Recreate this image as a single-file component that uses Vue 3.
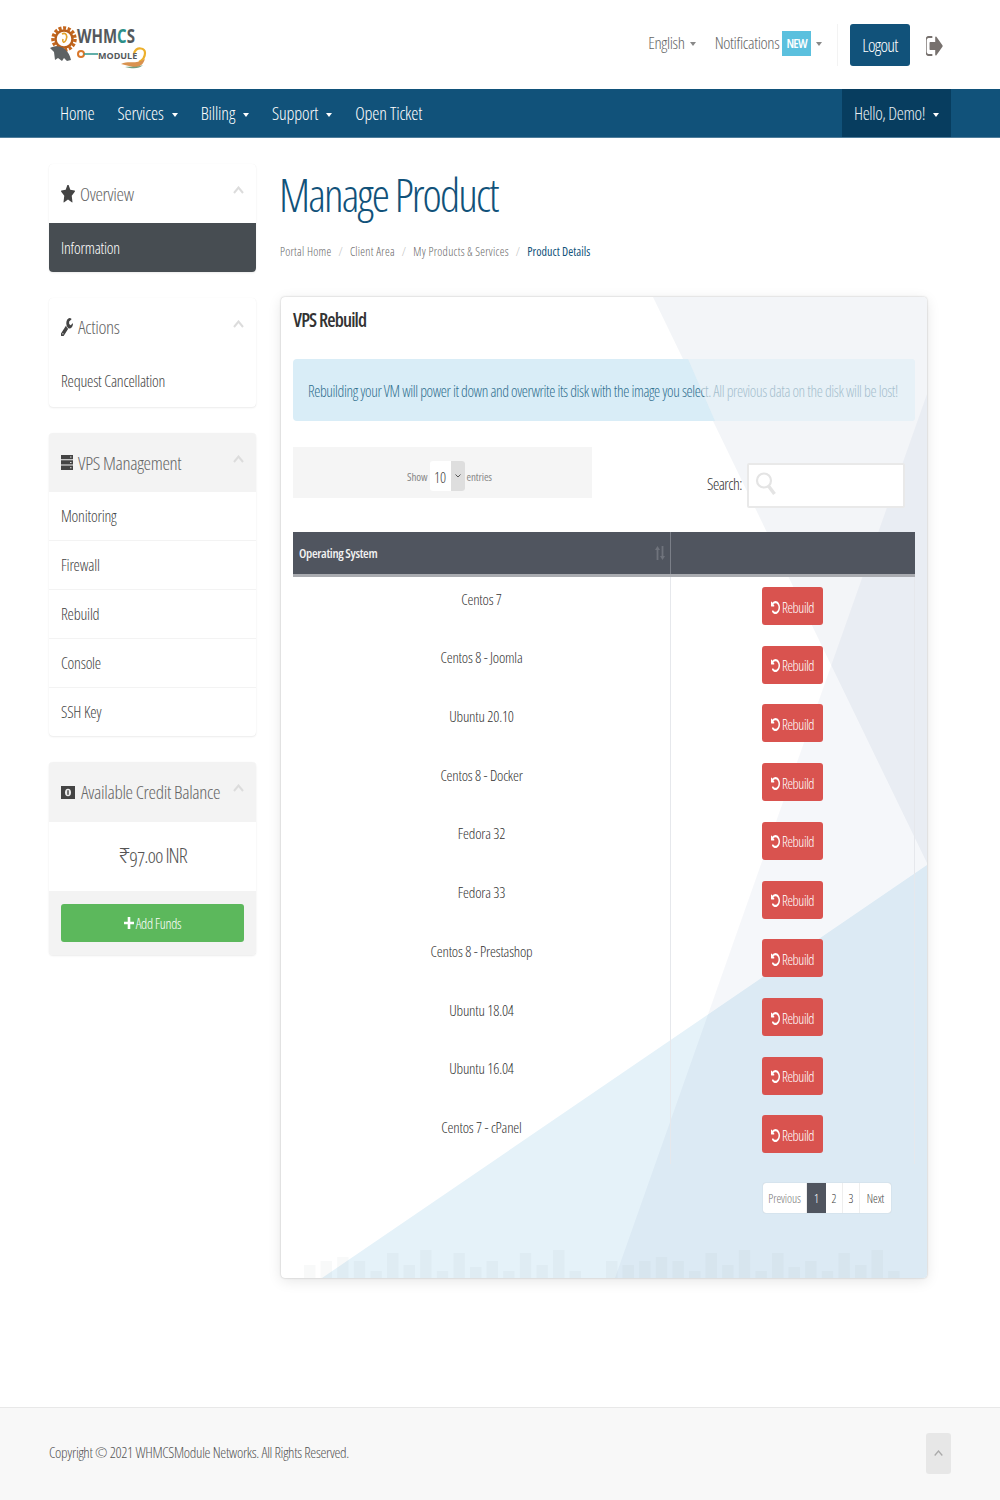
<script setup>
const navItems = [
  { label: 'Home', caret: false },
  { label: 'Services', caret: true },
  { label: 'Billing', caret: true },
  { label: 'Support', caret: true },
  { label: 'Open Ticket', caret: false },
]
const crumbs = ['Portal Home', 'Client Area', 'My Products & Services']
const vpsItems = ['Monitoring', 'Firewall', 'Rebuild', 'Console', 'SSH Key']
const systems = ['Centos 7', 'Centos 8 - Joomla', 'Ubuntu 20.10', 'Centos 8 - Docker', 'Fedora 32', 'Fedora 33', 'Centos 8 - Prestashop', 'Ubuntu 18.04', 'Ubuntu 16.04', 'Centos 7 - cPanel']
const barH = [13, 17, 21, 17, 7, 25, 13, 28, 7, 25, 11, 17, 7, 25, 13, 28, 7]
const barH2 = [17, 13, 17, 21, 17, 7, 25, 13, 28, 7, 25, 11, 17, 7, 25, 13, 28, 7]
const bars = [
  ...barH.map((h, i) => ({ x: 23 + i * 16.6, h })),
  ...barH2.map((h, i) => ({ x: 325 + i * 16.6, h })),
]
const undoPath = 'M1664 896q0 156-61 298t-164 245-245 164-298 61q-172 0-327-72.500t-264-204.500q-7-10-6.500-22.500t8.500-20.500l137-138q10-9 25-9 16 2 23 12 73 95 179 147t225 52q104 0 198.500-40.500t163.500-109.500 109.500-163.500 40.500-198.500-40.500-198.500-109.500-163.500-163.500-109.500-198.500-40.500q-98 0-188 35.500t-160 101.500l137 138q31 30 14 69-17 40-59 40h-448q-26 0-45-19t-19-45v-448q0-42 40-59 39-17 69 14l130 129q107-101 244.500-156.500t284.500-55.500q156 0 298 61t245 164 164 245 61 298z'
</script>

<template>
  <div class="page">
    <header class="top">
      <svg class="logo" width="98" height="48" viewBox="0 0 98 48">
        <circle cx="15" cy="16" r="11" fill="none" stroke="#c4661c" stroke-width="3.500" stroke-dasharray="3 1.600" />
        <circle cx="15" cy="16" r="8.500" fill="none" stroke="#b9601c" stroke-width="2.500" />
        <path d="M13 11c4-2 6 2 4 6s-4 2-3-1" fill="none" stroke="#e3a32b" stroke-width="1.600" />
        <path d="M1 25c8-4 18-1 21 12l-4 1-3-3-2 3-4-3-3 2-1-8z" fill="#5d6264" />
        <text transform="translate(28 20) scale(1 1.300)" class="lg-a">WHM<tspan class="lg-b">C</tspan>S</text>
        <circle cx="32" cy="31" r="3" fill="none" stroke="#d9772a" stroke-width="2" />
        <rect x="35" y="30.200" width="14" height="1.600" fill="#3c9c95" />
        <text x="49" y="35.500" class="lg-c">MODULE</text>
        <path d="M85 30c3-7 11-5 11 0 0 5-4 8-6 9" fill="none" stroke="#edb02c" stroke-width="2.200" />
        <path d="M72 41c8-4 14 1 24-5-2 6-6 9-12 8-4-1-8-2-12-3z" fill="#d9924f" />
        <path d="M76 44c6-1 10 1 18-2-4 4-10 4-18 2z" fill="#6f9f80" />
      </svg>
      <div class="top-right">
        <span class="top-link english">English<i class="caret grey"></i></span>
        <span class="top-link notif">Notifications<b class="badge">NEW</b><i class="caret grey"></i></span>
        <span class="divider"></span>
        <button class="logout">Logout</button>
        <svg class="signout" width="17" height="20" viewBox="128 256 1536 1280" preserveAspectRatio="none">
          <path d="M704 1440q0 4 1 20t.5 26.500-3 23.500-10 19.500-20.500 6.500h-320q-119 0-203.500-84.500t-84.500-203.500v-704q0-119 84.500-203.500t203.500-84.500h320q13 0 22.500 9.500t9.500 22.500q0 4 1 20t.5 26.500-3 23.500-10 19.500-20.500 6.500h-320q-66 0-113 47t-47 113v704q0 66 47 113t113 47h312l11.500 1 11.500 3 8 5.500 7 9 2 13.500zm928-544q0 26-19 45l-544 544q-19 19-45 19t-45-19-19-45v-288h-448q-26 0-45-19t-19-45v-384q0-26 19-45t45-19h448v-288q0-26 19-45t45-19 45 19l544 544q19 19 19 45z" fill="#77716e" />
        </svg>
      </div>
    </header>

    <nav class="nav">
      <div class="nav-left">
        <a v-for="n in navItems" :key="n.label" class="nav-item">{{ n.label }}<i v-if="n.caret" class="caret"></i></a>
      </div>
      <a class="hello">Hello, Demo!<i class="caret"></i></a>
    </nav>

    <div class="content">
      <aside class="side">
        <section class="card">
          <div class="card-head">
            <svg width="14" height="18" viewBox="64 128 1664 1536" preserveAspectRatio="none"><path d="M1728 647q0 22-26 48l-363 354 86 500q1 7 1 20 0 21-10.500 35.500t-30.500 14.500q-19 0-40-12l-449-236-449 236q-22 12-40 12-21 0-31.500-14.500t-10.500-35.500q0-6 2-20l86-500-364-354q-25-27-25-48 0-37 56-46l502-73 225-455q19-41 49-41t49 41l225 455 502 73q56 9 56 46z" fill="#444" /></svg>
            <span>Overview</span>
            <svg class="chev" width="11" height="8" viewBox="0 0 11 8"><path d="M1 7l4.500-5.500L10 7" fill="none" stroke="#dcdcdc" stroke-width="2" /></svg>
          </div>
          <a class="item active">Information</a>
        </section>

        <section class="card">
          <div class="card-head short">
            <svg width="12" height="18" viewBox="128 128 1600 1536" preserveAspectRatio="none"><path d="M448 1472q0-26-19-45t-45-19-45 19-19 45 19 45 45 19 45-19 19-45zm644-420l-682 682q-37 37-90 37-52 0-91-37l-106-108q-38-36-38-90 0-53 38-91l681-681q39 98 114.500 173.500t173.500 114.500zm634-435q0 39-23 106-47 134-164.500 217.500t-258.500 83.500q-185 0-316.500-131.500t-131.500-316.500 131.500-316.500 316.500-131.500q58 0 121.500 16.500t107.500 46.500q16 11 16 28t-16 28l-293 169v224l193 107q5-3 79-48.500t135.500-81 70.500-35.500q15 0 23.500 10t8.500 25z" fill="#444" /></svg>
            <span>Actions</span>
            <svg class="chev" width="11" height="8" viewBox="0 0 11 8"><path d="M1 7l4.500-5.500L10 7" fill="none" stroke="#dcdcdc" stroke-width="2" /></svg>
          </div>
          <a class="item second">Request Cancellation</a>
        </section>

        <section class="card">
          <div class="card-head grey">
            <svg width="12" height="15" viewBox="0 0 12 15"><path d="M0 0h12v4.300H0zM0 5.300h12v4.300H0zM0 10.600h12V15H0z" fill="#444" /><path d="M9 1.500h1.500v1H9zM9 6.900h1.500v1H9zM9 12.300h1.500v1H9z" fill="#ddd" /></svg>
            <span>VPS Management</span>
            <svg class="chev" width="11" height="8" viewBox="0 0 11 8"><path d="M1 7l4.500-5.500L10 7" fill="none" stroke="#dcdcdc" stroke-width="2" /></svg>
          </div>
          <a v-for="v in vpsItems" :key="v" class="item lined">{{ v }}</a>
        </section>

        <section class="card">
          <div class="card-head grey tall">
            <svg width="14" height="13" viewBox="0 0 14 13"><rect width="14" height="13" fill="#444" /><ellipse cx="7" cy="6.500" rx="3" ry="3.800" fill="#eee" /><rect x="6.300" y="4.200" width="1.400" height="4.600" fill="#444" /></svg>
            <span>Available Credit Balance</span>
            <svg class="chev" width="11" height="8" viewBox="0 0 11 8"><path d="M1 7l4.500-5.500L10 7" fill="none" stroke="#dcdcdc" stroke-width="2" /></svg>
          </div>
          <div class="balance">₹97.00 INR</div>
          <div class="card-foot">
            <button class="funds"><svg width="10" height="12" viewBox="0 0 10 12" preserveAspectRatio="none"><path d="M3.700 0h2.600v4.700H10v2.600H6.300V12H3.700V7.300H0V4.700h3.700z" fill="#fff" /></svg>Add Funds</button>
          </div>
        </section>
      </aside>

      <main class="main">
        <h1 class="title">Manage Product</h1>
        <div class="crumbs">
          <template v-for="c in crumbs" :key="c"><a>{{ c }}</a><i>/</i></template>
          <a class="current">Product Details</a>
        </div>

        <section class="panel">
          <svg class="bg" width="646" height="981" viewBox="0 0 646 981">
            <polygon points="372,0 646,0 646,566" fill="#f3f5f8" />
            <polygon points="41,981 646,568 646,981" fill="#e5f2f9" />
            <polygon points="646,97 334,981 646,981" fill="#002878" fill-opacity="0.04" />
            <rect v-for="(b, i) in bars" :key="i" :x="b.x" :y="981 - b.h" width="11.400" :height="b.h" fill="#9aa5ad" fill-opacity="0.07" />
          </svg>
          <div class="panel-body">
            <h2 class="panel-title">VPS Rebuild</h2>
            <div class="alert">Rebuilding your VM will power it down and overwrite its disk with the image you select. All previous data on the disk will be lost!</div>

            <div class="controls">
              <div class="length">
                <span>Show</span>
                <span class="select"><b>10</b><i><svg width="6" height="4" viewBox="0 0 6 4"><path d="M.5.500L3 3 5.500.500" fill="none" stroke="#555" stroke-width="1" /></svg></i></span>
                <span>entries</span>
              </div>
              <div class="search">
                <span class="search-label">Search:</span>
                <div class="search-box">
                  <svg width="22" height="26" viewBox="0 0 22 26"><circle cx="9" cy="9.500" r="7" fill="none" stroke="#e4e4e4" stroke-width="2.200" /><path d="M13.500 15l6 8" stroke="#e4e4e4" stroke-width="3.500" /></svg>
                </div>
              </div>
            </div>

            <div class="table">
              <div class="thead">
                <div class="th">Operating System
                  <svg class="sort" width="10" height="14" viewBox="0 0 10 14"><path d="M0 4L2.500 0 5 4H3.400v10H1.600V4zM6.600 0h1.800v10H10l-2.500 4L5 10h1.600z" fill="#6f737c" /></svg>
                </div>
                <div class="th last"></div>
              </div>
              <div v-for="s in systems" :key="s" class="tr">
                <div class="td-name">{{ s }}</div>
                <div class="td-act">
                  <button class="rebuild">
                    <svg width="9" height="13" viewBox="128 128 1536 1536" preserveAspectRatio="none"><path :d="undoPath" fill="#fff" /></svg><span>Rebuild</span>
                  </button>
                </div>
              </div>
            </div>

            <div class="pager">
              <a class="muted">Previous</a><a class="on">1</a><a>2</a><a>3</a><a>Next</a>
            </div>
          </div>
        </section>
      </main>
    </div>

    <footer class="foot">
      <span class="copy">Copyright © 2021 WHMCSModule Networks. All Rights Reserved.</span>
      <a class="totop"><svg width="9" height="6" viewBox="0 0 9 6"><path d="M.7 5.500L4.500 1l3.800 4.500" fill="none" stroke="#aaa" stroke-width="1.300" /></svg></a>
    </footer>
  </div>
</template>

<style>
body { margin: 0; background: #fff; }
</style>

<style scoped>
.page {
  width: 1000px;
  font-family: "Open Sans", "Noto Sans", sans-serif;
  font-stretch: 75%;
  color: #555;
}
.top {
  height: 89px;
  display: flex;
  justify-content: space-between;
  box-sizing: border-box;
  padding: 23px 57px 0 49px;
}
.logo { display: block; }
.lg-a { font: 700 15px "Open Sans", sans-serif; fill: #55595c; }
.lg-b { fill: #2d8f88; }
.lg-c { font: 700 9px "Open Sans", sans-serif; fill: #55595c; }
.top-right { display: flex; align-items: flex-start; height: 43px; margin-top: 1px; }
.top-link {
  display: flex;
  align-items: center;
  height: 36px;
  font-size: 17px;
  font-weight: 300;
  letter-spacing: -0.35px;
  color: #666;
  margin-right: 19px;
}
.notif { margin-right: 15px; }
.badge {
  background: #5bc0de;
  color: #fff;
  font-size: 13px;
  font-weight: 600;
  letter-spacing: -0.7px;
  height: 25px;
  line-height: 25px;
  padding: 0 4px;
  margin: 3px 0 0 3px;
}
.divider { width: 1px; height: 42px; background: #f3f3f3; margin-right: 12px; }
.logout {
  width: 60px;
  height: 42px;
  border: 0;
  border-radius: 3px;
  background: #11527a;
  color: #fff;
  font: inherit;
  font-stretch: 75%;
  font-size: 18px;
  font-weight: 300;
  letter-spacing: -0.7px;
  padding: 0;
}
.signout { margin: 12px 0 0 16px; }
.caret {
  display: inline-block;
  width: 0;
  height: 0;
  border-left: 3px solid transparent;
  border-right: 3px solid transparent;
  border-top: 4px solid #fff;
  margin: 3px 0 0 8px;
}
.caret.grey { border-top-color: #888; margin-left: 5px; }
.nav {
  height: 49px;
  background: #11527a;
  border-bottom: 1px solid #4f7d9b;
  box-sizing: border-box;
  display: flex;
  justify-content: space-between;
  padding: 0 49px 0 60px;
  color: #fff;
  font-size: 18px;
  font-weight: 300;
  letter-spacing: -0.15px;
}
.nav-left { display: flex; gap: 23px; }
.nav-item, .hello { display: flex; align-items: center; color: #fff; }
.hello { background: #073d5f; padding: 0 12px; height: 48px; color: #e8eef2; letter-spacing: -0.4px; }
.content {
  display: flex;
  gap: 25px;
  padding: 26px 0 0 49px;
  height: 1269px;
  box-sizing: border-box;
}
.side { width: 207px; display: flex; flex-direction: column; gap: 26px; }
.card {
  background: #fff;
  border-radius: 4px;
  box-shadow: 0 1px 2px rgba(0, 0, 0, 0.08), 0 0 1px rgba(0, 0, 0, 0.06);
  overflow: hidden;
}
.card-head {
  height: 59px;
  display: flex;
  align-items: center;
  gap: 5px;
  padding: 0 12px;
  font-size: 19px;
  font-weight: 300;
  letter-spacing: -0.35px;
  color: #666;
  position: relative;
}
.card-head.short { height: 58px; }
.card-head.tall { height: 60px; gap: 6px; }
.card-head.grey { background: #f3f3f3; }
.chev { position: absolute; right: 12px; top: 22px; }
.item {
  display: flex;
  align-items: center;
  height: 49px;
  padding: 0 12px;
  font-size: 16px;
  font-weight: 300;
  letter-spacing: -0.22px;
  color: #444;
}
.item.second { height: 51px; box-sizing: border-box; padding-bottom: 2px; }
.item.lined { border-bottom: 1px solid #f3f3f3; box-sizing: border-box; }
.item.lined:last-child { border-bottom: 0; height: 48px; }
.item.active { background: #474d52; color: #fff; }
.balance {
  height: 69px;
  line-height: 67px;
  text-align: center;
  font-size: 21px;
  font-weight: 300;
  font-variant-numeric: oldstyle-nums;
  letter-spacing: -1px;
  color: #555;
}
.card-foot { background: #f3f3f3; padding: 13px 12px 13px; height: 64px; box-sizing: border-box; }
.funds {
  width: 183px;
  height: 38px;
  background: #5cb85c;
  color: #fff;
  border: 0;
  border-radius: 3px;
  font: inherit;
  font-stretch: 75%;
  font-size: 14px;
  font-weight: 300;
  letter-spacing: -0.3px;
  display: flex;
  align-items: center;
  justify-content: center;
  gap: 2px;
}
.main { width: 646px; }
.title {
  margin: 0 0 0 -2px;
  height: 60px;
  line-height: 60px;
  font-size: 46px;
  font-weight: 300;
  letter-spacing: -1.9px;
  color: #11527a;
}
.crumbs {
  height: 22px;
  margin: 16px 0 0 -1px;
  font-size: 12px;
  font-weight: 300;
  letter-spacing: 0.27px;
  color: #666;
  display: flex;
  align-items: center;
}
.crumbs i { font-style: normal; color: #bbb; margin: 0 7px; }
.crumbs .current { color: #11527a; font-weight: 400; letter-spacing: 0.05px; }
.panel {
  margin-top: 35px;
  height: 981px;
  position: relative;
  border-radius: 4px;
  overflow: hidden;
  background: #fff;
  box-shadow: 0 0 2px rgba(0, 0, 0, 0.25), 0 3px 14px rgba(0, 0, 0, 0.1);
}
.bg { position: absolute; inset: 0; }
.panel-body { position: relative; padding: 0 12px; }
.panel-title {
  margin: 0;
  height: 62px;
  line-height: 46px;
  font-size: 19px;
  font-weight: 600;
  letter-spacing: -0.85px;
  color: #333;
}
.alert {
  height: 62px;
  line-height: 64px;
  background: #d9edf7;
  color: #31708f;
  border-radius: 4px;
  padding: 0 15px;
  font-size: 15.500px;
  font-weight: 300;
  letter-spacing: -0.39px;
  white-space: nowrap;
  position: relative;
  width: 622px;
  box-sizing: border-box;
  overflow: hidden;
}
.alert::after {
  content: "";
  position: absolute;
  inset: 0;
  background: rgba(240, 243, 247, 0.6);
  clip-path: polygon(395px 0, 100% 0, 100% 100%, 422px 100%);
}
.controls { display: flex; justify-content: space-between; margin-top: 26px; height: 85px; }
.length {
  width: 299px;
  height: 51px;
  box-sizing: border-box;
  padding: 7px 0 0 14px;
  background: #f5f5f5;
  display: flex;
  align-items: center;
  justify-content: center;
  gap: 2px;
  font-size: 11px;
  letter-spacing: -0.1px;
  color: #888;
}
.select {
  display: flex;
  width: 35px;
  height: 30px;
  background: #fff;
  border-radius: 3px;
  overflow: hidden;
}
.select b { flex: 1; text-align: center; font-weight: 300; font-size: 15px; line-height: 32px; color: #444; }
.select i { width: 14px; background: #dedede; display: flex; align-items: center; justify-content: center; box-sizing: border-box; }
.search { display: flex; align-items: center; gap: 5px; height: 45px; margin: 16px 10px 0 0; font-size: 16px; font-weight: 300; letter-spacing: -0.5px; color: #333; }
.search-label { margin-bottom: 3px; }
.search-box {
  width: 158px;
  height: 45px;
  box-sizing: border-box;
  border: 2px solid #e9e9e9;
  border-radius: 2px;
  background: #fff;
  padding: 6px 0 0 6px;
}
.table { width: 622px; }
.thead { display: flex; height: 45px; box-sizing: border-box; background: #50555f; border-bottom: 3px solid #a9abb0; }
.th {
  width: 378px;
  box-sizing: border-box;
  border-right: 1px solid #7b7f88;
  padding-left: 6px;
  color: #f2f2f2;
  font-size: 13px;
  font-weight: 600;
  letter-spacing: -0.35px;
  line-height: 43px;
  position: relative;
}
.th.last { flex: 1; border-right: 0; }
.sort { position: absolute; right: 5px; top: 14px; }
.tr { display: flex; height: 58.720px; }
.td-name {
  width: 378px;
  box-sizing: border-box;
  border-right: 1px solid #e6e8ec;
  text-align: center;
  padding-top: 11.500px;
  font-size: 15px;
  font-weight: 300;
  letter-spacing: -0.2px;
  line-height: 20px;
  color: #333;
}
.td-act {
  flex: 1;
  box-sizing: border-box;
  border-right: 1px solid #e6e8ec;
  padding-top: 10px;
  display: flex;
  justify-content: center;
}
.rebuild {
  width: 61px;
  height: 38px;
  padding: 2px 0 0;
  border: 0;
  border-radius: 3px;
  background: #d9534f;
  color: #fff;
  font: inherit;
  font-stretch: 75%;
  font-size: 14px;
  font-weight: 300;
  letter-spacing: -0.4px;
  display: flex;
  align-items: center;
  justify-content: center;
  gap: 2px;
}
.pager {
  display: flex;
  width: 128px;
  height: 30px;
  margin: 19px 0 0 470px;
  background: #fff;
  border-radius: 3px;
  box-shadow: 0 0 1px rgba(0, 0, 0, 0.25);
  font-size: 12px;
  font-weight: 300;
  letter-spacing: -0.1px;
  color: #444;
}
.pager a { display: flex; align-items: center; justify-content: center; padding: 0 6px; border-right: 1px solid #eee; min-width: 5px; }
.pager a:nth-child(3), .pager a:nth-child(4) { flex: 0 0 17px; box-sizing: border-box; padding: 0; }
.pager a:last-child { border-right: 0; flex: 1; }
.pager .muted { color: #777; flex: 0 0 44px; box-sizing: border-box; padding: 0; }
.pager .on { background: #50555f; color: #fff; flex: 0 0 19px; box-sizing: border-box; padding: 0; border: 0; }
.foot {
  height: 93px;
  background: #f8f8f8;
  border-top: 1px solid #e8e8e8;
  box-sizing: border-box;
  display: flex;
  align-items: center;
  justify-content: space-between;
  padding: 0 49px 2px;
  font-size: 15px;
  font-weight: 300;
  letter-spacing: -0.31px;
  color: #555;
}
.copy { margin-bottom: 2px; }
.totop {
  width: 25px;
  height: 41px;
  background: #e7e7e7;
  border-radius: 3px;
  display: flex;
  align-items: center;
  justify-content: center;
}
</style>
